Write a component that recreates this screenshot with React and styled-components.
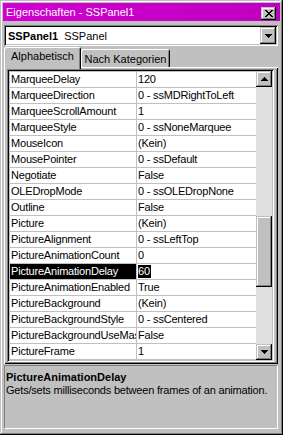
import React from "react";
import styled, { createGlobalStyle } from "styled-components";

const GlobalStyle = createGlobalStyle`
  html, body { margin: 0; padding: 0; background: #c0c0c0; }
  body {
    font-family: "Liberation Sans", Arial, sans-serif;
    font-size: 11px;
    letter-spacing: -0.2px;
    color: #000;
  }
  * { box-sizing: border-box; }
`;

const raisedShadow =
  "inset -1px -1px #000, inset 1px 1px #c0c0c0, inset -2px -2px #808080, inset 2px 2px #fff";
const sunkenShadow =
  "inset 1px 1px #808080, inset -1px -1px #fff, inset 2px 2px #000, inset -2px -2px #c0c0c0";

const Window = styled.div`
  width: 283px;
  height: 435px;
  background: #c0c0c0;
  box-shadow: ${raisedShadow};
  padding: 3px 5px 6px 4px;
  display: flex;
  flex-direction: column;
  overflow: hidden;
`;

const TitleBar = styled.div`
  height: 18px;
  margin: 0 -2px 0 -1px;
  background: linear-gradient(90deg, #d000d0, #c000c0);
  display: flex;
  align-items: center;
  justify-content: space-between;
  padding: 0 4px 0 3px;
  color: #fff;
  white-space: nowrap;
`;

const TitleText = styled.span`
  line-height: 18px;
  letter-spacing: 0;
`;

const CaptionButton = styled.div`
  width: 15px;
  height: 13px;
  align-self: flex-end;
  margin-bottom: 1px;
  background: #c0c0c0;
  box-shadow: ${raisedShadow};
  display: flex;
  align-items: center;
  justify-content: center;
  padding-bottom: 1px;
`;

const Combo = styled.div`
  margin-top: 4px;
  height: 21px;
  background: #fff;
  box-shadow: ${sunkenShadow};
  padding: 2px;
  display: flex;
  align-items: center;
`;

const ComboText = styled.div`
  flex: 1;
  padding-left: 2px;
  white-space: nowrap;
  display: flex;
  gap: 6px;
  letter-spacing: 0;
`;

const ObjName = styled.span`
  font-weight: bold;
`;

const ArrowButton = styled.div`
  width: 16px;
  height: ${(p) => p.$h || 16}px;
  flex: none;
  background: #c0c0c0;
  box-shadow: ${raisedShadow};
  display: flex;
  align-items: center;
  justify-content: center;
`;

const TabStrip = styled.div`
  margin-top: 1px;
  height: 20px;
  display: flex;
  align-items: flex-end;
`;

const Tab = styled.div`
  position: relative;
  z-index: 1;
  width: ${(p) => p.$w}px;
  height: ${(p) => (p.$active ? 22 : 18)}px;
  margin-bottom: ${(p) => (p.$active ? -2 : 0)}px;
  padding-top: ${(p) => (p.$active ? 0 : 1)}px;
  background: #c0c0c0;
  border-radius: 2px 2px 0 0;
  box-shadow: inset 1px 1px #fff, inset -1px 0 #000, inset 2px 2px #c0c0c0, inset -2px 0 #808080;
  display: flex;
  align-items: ${(p) => (p.$active ? "flex-start" : "center")};
  justify-content: center;
  line-height: ${(p) => (p.$active ? "19px" : "16px")};
  white-space: nowrap;
  letter-spacing: 0;
`;

const Panel = styled.div`
  height: 297px;
  box-shadow: inset 1px 1px #fff, inset -1px -1px #000, inset 2px 2px #c0c0c0, inset -2px -2px #808080;
  padding: 2px 4px 2px 3px;
`;

const Grid = styled.div`
  height: 293px;
  background: #fff;
  box-shadow: ${sunkenShadow};
  padding: 2px;
  display: flex;
`;

const Rows = styled.div`
  flex: 1;
  border-top: 1px solid #c0c0c0;
  border-left: 1px solid #c0c0c0;
  overflow: hidden;
`;

const Row = styled.div`
  height: 16px;
  display: flex;
  border-bottom: 1px solid #c0c0c0;
  line-height: 15px;
  white-space: nowrap;
`;

const NameCell = styled.div`
  width: 127px;
  flex: none;
  overflow: hidden;
  padding-left: 1px;
  border-right: 1px solid #c0c0c0;
  background: ${(p) => (p.$selected ? "#000" : "#fff")};
  color: ${(p) => (p.$selected ? "#fff" : "#000")};
`;

const ValueCell = styled.div`
  flex: 1;
  overflow: hidden;
  padding-left: 1px;
`;

const SelectedValue = styled.span`
  display: inline-block;
  background: #000;
  color: #fff;
  line-height: 13px;
  padding: 0 1px 0 0;
  margin-top: 1px;
`;

const ScrollBar = styled.div`
  width: 16px;
  flex: none;
  display: flex;
  flex-direction: column;
`;

const Track = styled.div`
  background: #e0e0e0;
  height: ${(p) => (p.$h ? `${p.$h}px` : "auto")};
  flex: ${(p) => (p.$h ? "none" : "1")};
`;

const Thumb = styled.div`
  height: 71px;
  background: #c0c0c0;
  box-shadow: ${raisedShadow};
`;

const Desc = styled.div`
  margin-top: 1px;
  height: 64px;
  border: 1px solid;
  border-color: #808080 #fff #fff #808080;
  padding: 5px 1px 0 1px;
  line-height: 13px;
  white-space: nowrap;
  overflow: hidden;
`;

const DescTitle = styled.div`
  font-weight: bold;
  letter-spacing: 0;
`;

const Pixels = ({ w, h, d }) => (
  <svg width={w} height={h} viewBox={`0 0 ${w} ${h}`} shapeRendering="crispEdges">
    <path d={d} fill="#000" />
  </svg>
);

const CLOSE =
  "M0 0h2v1H0z M6 0h2v1H6z M1 1h2v1H1z M5 1h2v1H5z M2 2h4v1H2z M3 3h2v1H3z M2 4h4v1H2z M1 5h2v1H1z M5 5h2v1H5z M0 6h2v1H0z M6 6h2v1H6z";
const DOWN = "M0 0h7v1H0z M1 1h5v1H1z M2 2h3v1H2z M3 3h1v1H3z";
const UP = "M3 0h1v1H3z M2 1h3v1H2z M1 2h5v1H1z M0 3h7v1H0z";

const properties = [
  ["MarqueeDelay", "120"],
  ["MarqueeDirection", "0 - ssMDRightToLeft"],
  ["MarqueeScrollAmount", "1"],
  ["MarqueeStyle", "0 - ssNoneMarquee"],
  ["MouseIcon", "(Kein)"],
  ["MousePointer", "0 - ssDefault"],
  ["Negotiate", "False"],
  ["OLEDropMode", "0 - ssOLEDropNone"],
  ["Outline", "False"],
  ["Picture", "(Kein)"],
  ["PictureAlignment", "0 - ssLeftTop"],
  ["PictureAnimationCount", "0"],
  ["PictureAnimationDelay", "60", true],
  ["PictureAnimationEnabled", "True"],
  ["PictureBackground", "(Kein)"],
  ["PictureBackgroundStyle", "0 - ssCentered"],
  ["PictureBackgroundUseMask", "False"],
  ["PictureFrame", "1"],
];

export default function App() {
  return (
    <>
      <GlobalStyle />
      <Window>
        <TitleBar>
          <TitleText>Eigenschaften - SSPanel1</TitleText>
          <CaptionButton>
            <Pixels w={8} h={7} d={CLOSE} />
          </CaptionButton>
        </TitleBar>
        <Combo>
          <ComboText>
            <ObjName>SSPanel1</ObjName>
            <span>SSPanel</span>
          </ComboText>
          <ArrowButton $h={17}>
            <Pixels w={7} h={4} d={DOWN} />
          </ArrowButton>
        </Combo>
        <TabStrip>
          <Tab $active $w={77}>Alphabetisch</Tab>
          <Tab $w={89}>Nach Kategorien</Tab>
        </TabStrip>
        <Panel>
          <Grid>
            <Rows>
              {properties.map(([name, value, selected]) => (
                <Row key={name}>
                  <NameCell $selected={selected}>{name}</NameCell>
                  <ValueCell>
                    {selected ? <SelectedValue>{value}</SelectedValue> : value}
                  </ValueCell>
                </Row>
              ))}
            </Rows>
            <ScrollBar>
              <ArrowButton>
                <Pixels w={7} h={4} d={UP} />
              </ArrowButton>
              <Track $h={129} />
              <Thumb />
              <Track />
              <ArrowButton>
                <Pixels w={7} h={4} d={DOWN} />
              </ArrowButton>
            </ScrollBar>
          </Grid>
        </Panel>
        <Desc>
          <DescTitle>PictureAnimationDelay</DescTitle>
          <div>Gets/sets milliseconds between frames of an animation.</div>
        </Desc>
      </Window>
    </>
  );
}
